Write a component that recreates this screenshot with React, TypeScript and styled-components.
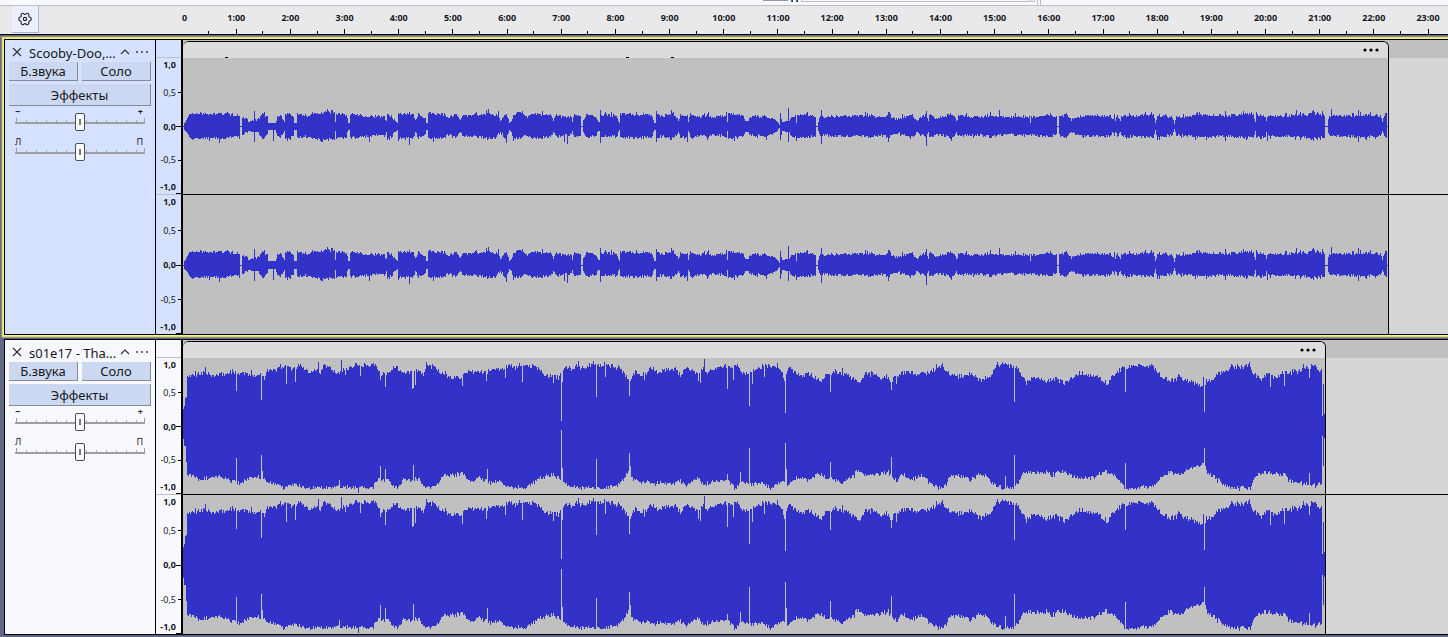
import React from "react";
import styled, { createGlobalStyle } from "styled-components";

const GlobalStyle = createGlobalStyle`
  * { box-sizing: border-box; }
  body {
    margin: 0;
    overflow: hidden;
    background: #626888;
    font-family: "Noto Sans", sans-serif;
    color: #16181d;
  }
`;

/* ---------- waveform data ---------- */

type Point = [number, number];

const parse = (text: string): Point[] =>
  text
    .trim()
    .split(/\s+/)
    .map((pair) => pair.split(":").map(Number) as Point);

const noise = (n: number) => {
  const s = Math.sin(n * 12.9898 + 4.1) * 43758.5453;
  return s - Math.floor(s);
};

/* Interpolates the key levels, adds grain, then applies single-column peaks and dips. */
function envelope(keys: Point[], exact: Point[], length: number, grain: number, seed: number): number[] {
  const out: number[] = [];
  let k = 0;
  for (let x = 0; x < length; x++) {
    while (k < keys.length - 2 && keys[k + 1][0] <= x) k++;
    const [x0, y0] = keys[k];
    const [x1, y1] = keys[k + 1];
    const t = Math.min(1, Math.max(0, (x - x0) / (x1 - x0)));
    const level = y0 + (y1 - y0) * t;
    const swing = level < 6 ? 0 : (noise(x + seed) - 0.5) * grain;
    const burst = level >= 6 && noise(x * 3 + seed) > 0.93 ? 2 : 0;
    out.push(Math.max(0, Math.round(level + swing + burst)));
  }
  exact.forEach(([x, y]) => {
    if (x < length) out[x] = y;
  });
  return out;
}

const wavePath = (top: number[], bottom: number[]) =>
  top.map((t, x) => `M${x} ${-t}h1V${bottom[x] + 1}h-1z`).join("");

const QUIET_KEYS = parse(`
0:0 1:3 4:7 7:13 17:12 30:12 44:12 56:10 57:0 58:0 59:8 64:7 65:4 70:6 74:6 79:12 84:9 85:3 92:3 94:9 97:11 101:4
102:13 110:10 111:3 113:3 114:12 125:10 127:12 143:14 151:13 152:4 153:12 163:11 165:3 166:3 167:12 187:10 197:9 201:10 203:5
204:13 210:7 214:3 215:13 230:12 232:6 235:12 242:7 243:3 244:3 245:13 262:11 264:8 273:12 277:6 280:10 297:11 305:13 313:11
317:5 323:13 326:3 328:5 330:12 337:13 343:9 350:12 367:11 370:6 373:11 380:9 388:9 389:4 391:11 397:9 398:0 399:0 400:6
403:11 413:9 415:4 416:4 418:11 433:10 436:3 437:12 468:11 471:3 472:3 473:13 478:9 488:13 493:9 495:5 497:11 504:11 505:4 507:12
517:9 525:11 530:8 543:11 544:4 545:12 560:11 562:5 565:5 566:9 582:10 593:6 596:1 597:12 599:4 604:5 606:5 608:10 612:10 613:3
614:11 623:11 632:10 633:0 634:0 635:4 637:9 640:9 653:10 677:10 684:11 697:9 705:11 713:7 720:9 729:11 734:5 738:9 743:11 745:5
746:11 754:8 769:12 773:5 775:10 797:9 807:11 818:9 827:8 832:10 842:9 848:9 865:11 873:9 874:0 875:0 876:9 883:11 888:6 892:9
904:10 927:10 929:6 931:11 932:5 934:11 937:5 938:10 963:11 970:11 972:3 974:11 989:9 991:2 993:9 1010:10 1015:11 1030:11 1043:10
1060:12 1070:11 1072:4 1073:12 1082:10 1083:5 1084:10 1097:10 1113:11 1130:12 1141:11 1142:0 1144:0 1145:7 1148:11 1150:10 1163:10
1175:11 1185:11 1197:10 1199:4 1201:11 1203:12 1204:0`);
const QUIET_TOP = parse(`17:14 44:14 71:15 81:14 142:15 144:17 148:16 305:17 315:15 339:15 417:16 422:14 473:15 488:16 525:14 543:14 597:13 605:18 623:13 638:16 684:13 705:14 743:15 807:14 816:16 847:3 883:13 962:14 968:14 1042:15 1060:15 1073:14 1113:16 1130:16 1139:15 1148:17 1175:16`);
const QUIET_BOTTOM = parse(`26:14 36:16 71:15 90:14 138:15 186:15 226:18 323:16 330:14 381:15 384:17 417:16 473:15 504:15 583:13 605:15 613:14 638:17 705:15 743:19 768:14 847:7 974:13 1012:13 1042:14 1084:14 1112:13 1130:14 1175:15`);

const LOUD_TOP_KEYS = parse(`
0:13 1:20 3:31 4:48 10:51 20:53 30:50 47:53 59:53 67:51 77:52 81:48 84:57 92:55 97:60 110:57 117:61 125:54 130:57 138:54
140:60 147:59 154:53 160:56 167:60 182:61 192:60 197:52 204:52 212:60 218:54 227:53 235:56 240:49 243:61 252:59 258:53 267:48
277:49 282:51 290:54 303:54 310:57 320:57 325:61 332:58 345:61 355:57 363:51 376:48 381:58 387:59 390:54 395:63 397:58 409:61
415:61 425:61 437:57 442:51 446:45 450:54 461:51 468:58 475:53 484:57 492:57 497:50 504:59 512:53 520:57 525:54 530:58 539:59
547:60 555:61 559:54 566:52 573:57 585:61 597:58 601:46 605:58 613:54 618:49 625:53 637:45 643:52 652:55 659:53 663:52 675:43
682:53 698:48 703:50 708:45 713:51 722:53 740:52 750:56 759:62 763:53 773:49 788:52 796:46 808:50 812:59 817:62 825:60 834:58
842:46 855:47 864:44 872:48 880:43 894:51 899:54 904:50 912:50 919:46 925:42 930:51 939:58 944:59 950:61 964:58 969:61 977:51
985:45 997:48 1010:43 1019:38 1024:46 1030:47 1035:53 1044:55 1047:60 1060:59 1066:62 1070:53 1077:46 1084:52 1092:49 1102:53
1114:54 1120:58 1130:59 1138:55 1141:12`);
const LOUD_TOP = parse(`22:59 49:57 53:35 78:26 103:42 112:44 117:62 135:64 158:66 162:51 173:63 177:50 197:46 202:39 229:37 230:38 232:41 279:40 303:45 322:48 339:44 370:43 378:5 379:44 395:65 413:29 422:49 446:30 461:46 515:45 517:43 521:67 544:37 550:46 566:20 569:42 581:49 602:13 647:34 659:58 708:36 713:42 759:63 831:24 843:41 942:34 1020:49 1021:14 1087:39 1101:40 1120:62 1126:48 1139:10 1140:42 1141:12`);
const LOUD_BOTTOM_KEYS = parse(`
0:11 2:20 4:47 15:52 38:49 47:54 59:55 67:51 77:50 84:54 100:61 112:57 122:61 154:60 187:61 196:52 205:54 210:60 215:59 220:52
229:54 234:51 244:61 252:59 260:49 270:47 280:47 287:56 295:51 307:56 317:54 325:61 345:59 357:51 370:47 376:50 380:56 395:61
420:61 433:59 440:52 445:44 448:51 457:55 477:55 488:58 497:52 503:58 515:50 518:57 530:55 543:53 552:61 557:55 563:55 569:58
577:55 587:61 600:54 604:57 613:50 627:54 633:46 642:50 652:53 659:54 670:49 673:44 682:48 697:47 705:45 713:54 720:47 727:52
738:49 755:61 762:59 767:49 780:49 787:53 796:46 805:50 808:55 819:61 830:61 834:57 840:46 864:45 868:47 880:44 889:49 897:51
909:51 922:44 934:50 940:60 945:61 969:60 979:49 987:44 997:48 1007:41 1017:38 1020:34 1024:45 1034:52 1045:60 1067:61 1070:52
1077:46 1089:46 1102:48 1105:53 1120:57 1130:58 1138:56 1141:11`);
const LOUD_BOTTOM = parse(`53:31 78:28 79:44 156:53 175:66 197:39 202:42 230:38 304:42 378:3 379:41 413:32 446:26 447:39 472:59 544:47 557:45 566:21 602:16 603:42 647:35 659:57 708:30 822:49 831:28 868:50 942:36 1021:21 1101:46 1126:46 1139:9 1140:39 1141:11`);

const QUIET_LENGTH = 1205;
const LOUD_LENGTH = 1142;

const quietWave = wavePath(
  envelope(QUIET_KEYS, QUIET_TOP, QUIET_LENGTH, 3, 3),
  envelope(
    QUIET_KEYS.map(([x, y]) => [x, y > 5 ? y - 1 : y] as Point),
    QUIET_BOTTOM,
    QUIET_LENGTH,
    3,
    811
  )
);
const loudWave = wavePath(
  envelope(LOUD_TOP_KEYS, LOUD_TOP, LOUD_LENGTH, 5, 57),
  envelope(LOUD_BOTTOM_KEYS, LOUD_BOTTOM, LOUD_LENGTH, 4, 409)
);

/* Width of the visible timeline, in waveform columns. */
const VIEW_COLUMNS = 1265;

/* ---------- toolbar remnant and time ruler ---------- */

const Page = styled.main`
  min-height: 100vh;
`;

const ToolStrip = styled.div`
  display: flex;
  height: 6px;
  padding-left: 763px;
  background: #f8f9ff;
  border-bottom: 1px solid #bdbfc6;
`;

const StripBar = styled.span`
  width: 25px;
  height: 1px;
  margin-right: 3px;
  background: #9196a8;
`;

const StripMark = styled.span`
  width: 2px;
  height: 2px;
  margin-right: 3px;
  background: #2f6cae;
  border-right: 1px solid #3b3f48;
`;

const StripBox = styled.span<{ $width: number }>`
  width: ${(p) => p.$width}px;
  height: 2px;
  margin-right: 1px;
  border: 1px solid #bdbfc6;
  border-top: 0;
`;

const StripEdge = styled.span`
  width: 4px;
  height: 5px;
  margin-left: 1px;
  border: solid #bdbfc6;
  border-width: 0 1px;
`;

const RulerBar = styled.header`
  display: flex;
  height: 29px;
  background: #e9e9eb;
  border-bottom: 1px solid #000;
`;

const RulerCorner = styled.div`
  flex: 0 0 155px;
  padding: 0 12px;
`;

const GearButton = styled.button`
  display: flex;
  align-items: center;
  justify-content: center;
  width: 27px;
  height: 27px;
  padding: 0 1px 1px 0;
  border: solid #a9b4cc;
  border-width: 0 1px 1px 0;
  background: #ecf0fd;
  color: #22252c;
`;

const Ruler = styled.ol`
  flex: 1;
  min-width: 0;
  display: grid;
  grid-template-columns: repeat(24, 4.19%);
  margin: 0;
  padding: 0;
  list-style: none;
  overflow: hidden;
`;

const Minute = styled.li<{ $first: boolean }>`
  display: flex;
  flex-direction: column;
  justify-content: space-between;
  align-items: center;
  padding: 5px 0 0 ${(p) => (p.$first ? 5 : 0)}px;
  font-size: 9px;
  line-height: 14px;
  font-weight: 700;
  background: linear-gradient(#000, #000) 100% 100% / 1px 3px no-repeat;

  &::after {
    content: "";
    width: 1px;
    height: 5px;
    background: ${(p) => (p.$first ? "transparent" : "#000")};
  }
`;

/* ---------- tracks ---------- */

const TrackList = styled.div`
  display: flex;
  flex-direction: column;
  gap: 4px;
  padding: 4px 0 2px 4px;
`;

const TrackFrame = styled.section<{ $selected: boolean }>`
  display: flex;
  border: solid #000;
  border-width: 1px 0 1px 1px;
  box-shadow: ${(p) =>
    p.$selected ? "0 0 0 1px #f7f780, 0 0 0 2px #d8d878, 0 0 0 3px #92927a" : "none"};
`;

const Panel = styled.div<{ $selected: boolean }>`
  flex: 0 0 151px;
  display: flex;
  flex-direction: column;
  padding: 0 4px;
  border-right: 1px solid #000;
  background: ${(p) => (p.$selected ? "#d5e1ff" : "#f8f9ff")};
`;

const TitleRow = styled.div`
  display: flex;
  align-items: center;
  height: 22px;
  padding-top: 2px;
`;

const IconButton = styled.button<{ $width: number }>`
  display: flex;
  align-items: center;
  justify-content: center;
  flex: 0 0 ${(p) => p.$width}px;
  height: 16px;
  padding: 0;
  border: 0;
  background: none;
  color: #2a2d33;
`;

const Title = styled.h2`
  flex: 1;
  margin: 0 0 0 4px;
  padding-top: 2px;
  font-size: 13px;
  line-height: 18px;
  font-weight: 400;
  white-space: nowrap;
`;

const ButtonRow = styled.div`
  display: flex;
  gap: 4px;

  & + & {
    margin-top: 3px;
  }
`;

const PanelButton = styled.button<{ $tall?: boolean }>`
  flex: 1;
  height: ${(p) => (p.$tall ? 22 : 19)}px;
  padding: 0;
  border: solid #858b98;
  border-width: 0 1px 1px 0;
  background: #ccd8f1;
  color: #16181d;
  font: 400 13px / 18px "Noto Sans", sans-serif;
`;

const SliderBox = styled.label`
  display: grid;
  height: 25px;
  margin-bottom: 5px;
  padding: 0 6px;
`;

const SliderEnds = styled.span<{ $strong: boolean }>`
  grid-area: 1 / 1;
  display: flex;
  justify-content: space-between;
  height: 12px;
  padding-right: 2px;
  font-size: 9px;
  line-height: 12px;
  font-weight: ${(p) => (p.$strong ? 700 : 400)};
`;

const Slider = styled.input`
  grid-area: 1 / 1;
  align-self: end;
  appearance: none;
  width: 100%;
  height: 18px;
  margin: 0;
  background:
    linear-gradient(#9c9ea3, #9c9ea3) 0 9px / 100% 2px no-repeat,
    linear-gradient(#9c9ea3, #9c9ea3) 1px 5px / 1px 4px no-repeat,
    linear-gradient(#9c9ea3, #9c9ea3) 100% 5px / 1px 4px no-repeat,
    repeating-linear-gradient(90deg, #a9abb0 0 1px, transparent 1px 10px) 1px 7px / 100% 2px no-repeat;

  &::-webkit-slider-thumb {
    appearance: none;
    width: 10px;
    height: 18px;
    border: 1px solid #4a4c52;
    border-radius: 2px;
    background: linear-gradient(#77797f, #77797f) center / 2px 6px no-repeat, #fdfdfd;
  }
`;

const Scale = styled.div<{ $selected: boolean }>`
  flex: 0 0 27px;
  padding-top: 17px;
  border-right: 2px solid #000;
  background: ${(p) => (p.$selected ? "#d5e1ff" : "#f8f9ff")};
`;

const ScaleChannel = styled.div<{ $height: number }>`
  display: flex;
  flex-direction: column;
  height: ${(p) => p.$height}px;
  border-top: 1px solid #bcc0ca;
`;

const ScaleMark = styled.div<{ $edge?: "start" | "end"; $strong: boolean }>`
  flex: ${(p) => (p.$edge ? 1 : 2)} 1 0;
  display: flex;
  justify-content: flex-end;
  align-items: ${(p) => (p.$edge === "start" ? "flex-start" : p.$edge === "end" ? "flex-end" : "center")};
  padding: ${(p) => (p.$edge === "start" ? "1px 5px 0 0" : "0")};
  font-size: 9px;
  line-height: ${(p) => (p.$edge === "end" ? 14 : 12)}px;
  font-weight: ${(p) => (p.$strong ? 700 : 400)};

  &::after {
    content: "";
    display: ${(p) => (p.$edge === "start" ? "none" : "block")};
    width: ${(p) => (p.$strong ? 5 : 3)}px;
    height: 1px;
    margin-left: ${(p) => (p.$strong ? 0 : 2)}px;
    background: #000;
  }
`;

const WaveArea = styled.div<{ $clip: number }>`
  flex: 1;
  min-width: 0;
  display: grid;
  grid-template-columns: ${(p) => p.$clip}fr ${(p) => VIEW_COLUMNS - p.$clip}fr;
  background: #c0c0c0;
`;

const Clip = styled.div`
  min-width: 0;
  margin-top: 1px;
  border: solid #000;
  border-width: 1px 1px 0 0;
  border-radius: 6px 6px 0 0;
  overflow: hidden;
`;

const ClipHeader = styled.div`
  display: flex;
  align-items: center;
  justify-content: flex-end;
  height: 16px;
  padding-right: 9px;
  background: #dcdcdc;
`;

const ClipTitleTrace = styled.svg`
  flex: 1;
  min-width: 0;
  height: 16px;
`;

const ChannelBand = styled.div<{ $height: number; $color: string }>`
  height: ${(p) => p.$height}px;
  background: ${(p) => p.$color};

  & + & {
    border-top: 1px solid #000;
  }
`;

const Wave = styled.svg`
  display: block;
  width: 100%;
  height: 100%;
`;

const EmptyTail = styled.div`
  min-width: 0;
  padding-top: 18px;
`;

/* ---------- pieces ---------- */

const GearIcon = () => (
  <svg width="14" height="14" viewBox="0 0 15 15" fill="none" stroke="currentColor" strokeWidth="1.2" strokeLinejoin="round">
    <path d="M4.6 1.5Q5.4 1 6 1.8Q7.5 3.4 9 1.8Q9.6 1 10.4 1.5L11.3 2.1Q11.9 2.5 11.6 3.3Q11.1 5.3 13.1 5.7Q14 5.9 14 6.7V8.3Q14 9.1 13.1 9.3Q11.1 9.7 11.6 11.7Q11.9 12.5 11.3 12.9L10.4 13.5Q9.6 14 9 13.2Q7.5 11.6 6 13.2Q5.4 14 4.6 13.5L3.7 12.9Q3.1 12.5 3.4 11.7Q3.9 9.7 1.9 9.3Q1 9.1 1 8.3V6.7Q1 5.9 1.9 5.7Q3.9 5.3 3.4 3.3Q3.1 2.5 3.7 2.1Z" />
    <circle cx="7.5" cy="7.5" r="1.8" />
  </svg>
);

const CloseIcon = () => (
  <svg width="10" height="10" viewBox="0 0 10 10" stroke="currentColor" strokeWidth="1.1">
    <path d="M1 1l8 8M9 1l-8 8" />
  </svg>
);

const CaretIcon = () => (
  <svg width="10" height="6" viewBox="0 0 10 6" fill="none" stroke="currentColor" strokeWidth="1.1">
    <path d="M1 5l4-4 4 4" />
  </svg>
);

const MoreIcon = () => (
  <svg width="12" height="2" viewBox="0 0 12 2" fill="currentColor">
    <circle cx="1" cy="1" r="0.9" />
    <circle cx="6" cy="1" r="0.9" />
    <circle cx="11" cy="1" r="0.9" />
  </svg>
);

const ClipMenuIcon = () => (
  <svg width="16" height="4" viewBox="0 0 16 4" fill="#000">
    <circle cx="2" cy="2" r="1.6" />
    <circle cx="8" cy="2" r="1.6" />
    <circle cx="14" cy="2" r="1.6" />
  </svg>
);

interface RangeControlProps {
  name: string;
  low: string;
  high: string;
  strong?: boolean;
}

function RangeControl({ name, low, high, strong = false }: RangeControlProps) {
  return (
    <SliderBox>
      <SliderEnds $strong={strong}>
        <span>{low}</span>
        <span>{high}</span>
      </SliderEnds>
      <Slider type="range" aria-label={name} min={-100} max={100} defaultValue={0} />
    </SliderBox>
  );
}

function LevelScale({ height }: { height: number }) {
  return (
    <ScaleChannel $height={height}>
      <ScaleMark $edge="start" $strong>1,0</ScaleMark>
      <ScaleMark $strong={false}>0,5</ScaleMark>
      <ScaleMark $strong>0,0</ScaleMark>
      <ScaleMark $strong={false}>-0,5</ScaleMark>
      <ScaleMark $edge="end" $strong>-1,0</ScaleMark>
    </ScaleChannel>
  );
}

interface TrackProps {
  title: string;
  selected: boolean;
  columns: number;
  wave: string;
  trace: number[];
}

const CHANNEL_HEIGHTS = [136, 140];

function Track({ title, selected, columns, wave, trace }: TrackProps) {
  return (
    <TrackFrame $selected={selected} aria-label={title}>
      <Panel $selected={selected}>
        <TitleRow>
          <IconButton $width={16} aria-label="Закрыть">
            <CloseIcon />
          </IconButton>
          <Title>{title}</Title>
          <IconButton $width={16} aria-label="Свернуть">
            <CaretIcon />
          </IconButton>
          <IconButton $width={18} aria-label="Меню дорожки">
            <MoreIcon />
          </IconButton>
        </TitleRow>
        <ButtonRow>
          <PanelButton>Б.звука</PanelButton>
          <PanelButton>Соло</PanelButton>
        </ButtonRow>
        <ButtonRow>
          <PanelButton $tall>Эффекты</PanelButton>
        </ButtonRow>
        <RangeControl name="Громкость" low="−" high="+" strong />
        <RangeControl name="Панорама" low="Л" high="П" />
      </Panel>
      <Scale $selected={selected}>
        <LevelScale height={137} />
        <LevelScale height={140} />
      </Scale>
      <WaveArea $clip={columns + 1}>
        <Clip>
          <ClipHeader>
            <ClipTitleTrace aria-hidden="true">
              {trace.map((x) => (
                <rect key={x} x={x} y="15" width="3" height="1" />
              ))}
            </ClipTitleTrace>
            <ClipMenuIcon />
          </ClipHeader>
          {CHANNEL_HEIGHTS.map((height) => (
            <ChannelBand key={height} $height={height} $color="#c0c0c0">
              <Wave viewBox={`0 -68 ${columns} 136`} preserveAspectRatio="none" shapeRendering="crispEdges">
                <path d={wave} fill="#3232c8" />
              </Wave>
            </ChannelBand>
          ))}
        </Clip>
        <EmptyTail>
          {CHANNEL_HEIGHTS.map((height) => (
            <ChannelBand key={height} $height={height} $color="#d6d6d6" />
          ))}
        </EmptyTail>
      </WaveArea>
    </TrackFrame>
  );
}

export default function App() {
  return (
    <>
      <GlobalStyle />
      <Page>
        <ToolStrip>
          <StripBar />
          <StripMark />
          <StripMark />
          <StripBox $width={228} />
          <StripBox $width={5} />
          <StripEdge />
        </ToolStrip>
        <RulerBar>
          <RulerCorner>
            <GearButton aria-label="Параметры шкалы времени">
              <GearIcon />
            </GearButton>
          </RulerCorner>
          <Ruler>
            {Array.from({ length: 24 }, (_, minute) => (
              <Minute key={minute} $first={minute === 0}>
                {minute === 0 ? "0" : `${minute}:00`}
              </Minute>
            ))}
          </Ruler>
        </RulerBar>
        <TrackList>
          <Track title="Scooby-Doo,..." selected columns={QUIET_LENGTH} wave={quietWave} trace={[42, 443, 488]} />
          <Track title="s01e17 - Tha..." selected={false} columns={LOUD_LENGTH} wave={loudWave} trace={[]} />
        </TrackList>
      </Page>
    </>
  );
}
